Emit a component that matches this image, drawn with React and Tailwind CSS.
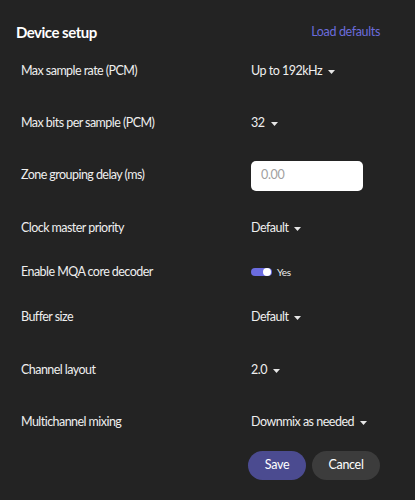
import React from "react";

function Caret() {
  return (
    <svg width="7" height="4" viewBox="0 0 7 4" className="ml-[6px] mt-[1px] shrink-0">
      <path d="M0 0 L7 0 L3.5 4 Z" fill="#e6e6e6" />
    </svg>
  );
}

function Select({ value }) {
  return (
    <div className="flex items-center whitespace-nowrap text-[12.5px] tracking-[-0.5px] text-[#efefef]">
      <span>{value}</span>
      <Caret />
    </div>
  );
}

function Row({ label, h, children }) {
  return (
    <div className={`grid grid-cols-[230px_1fr] items-center ${h}`}>
      <div className="text-[12.5px] tracking-[-0.55px] text-[#efefef] whitespace-nowrap">{label}</div>
      <div className="flex items-center">{children}</div>
    </div>
  );
}

export default function App() {
  return (
    <div
      className="w-[415px] h-[500px] bg-[#232323] overflow-hidden"
      style={{ fontFamily: "Lato, 'Open Sans', sans-serif" }}
    >
      <div className="pl-[16px] pr-[35px] pt-[19px] flex items-center justify-between h-[45px]">
        <div className="text-[15px] font-bold tracking-[-0.5px] text-white leading-[20px]">Device setup</div>
        <div className="text-[12.5px] tracking-[-0.35px] text-[#6b6cdc] leading-[20px]">Load defaults</div>
      </div>
      <div className="pl-[21px] pr-[35px] flex flex-col">
        <Row label="Max sample rate (PCM)" h="h-[52px]">
          <Select value="Up to 192kHz" />
        </Row>
        <Row label="Max bits per sample (PCM)" h="h-[52px]">
          <Select value="32" />
        </Row>
        <Row label="Zone grouping delay (ms)" h="h-[53px]">
          <div className="w-[112px] h-[30px] bg-white rounded-[5px] flex items-center pl-[10px] text-[12.5px] tracking-[-0.3px] text-[#a0a0a0]">
            0.00
          </div>
        </Row>
        <Row label="Clock master priority" h="h-[52px]">
          <Select value="Default" />
        </Row>
        <Row label="Enable MQA core decoder" h="h-[36px]">
          <div className="flex items-center">
            <div className="w-[21px] h-[8px] rounded-full bg-[#6b6ce0] relative">
              <div className="absolute right-[1px] top-0 w-[8px] h-[8px] rounded-full bg-white" />
            </div>
            <span className="ml-[5px] text-[10px] tracking-[-0.3px] text-[#efefef]">Yes</span>
          </div>
        </Row>
        <Row label="Buffer size" h="h-[54px]">
          <Select value="Default" />
        </Row>
        <Row label="Channel layout" h="h-[52px]">
          <Select value="2.0" />
        </Row>
        <Row label="Multichannel mixing" h="h-[52px]">
          <Select value="Downmix as needed" />
        </Row>
      </div>
      <div className="flex justify-end gap-[6px] pr-[35px] mt-[3px]">
        <button className="w-[58px] h-[29px] rounded-full bg-[#4b4b90] text-white text-[12.5px] tracking-[-0.3px]">Save</button>
        <button className="w-[68px] h-[29px] rounded-full bg-[#3c3c3c] text-white text-[12.5px] tracking-[-0.3px]">Cancel</button>
      </div>
    </div>
  );
}
